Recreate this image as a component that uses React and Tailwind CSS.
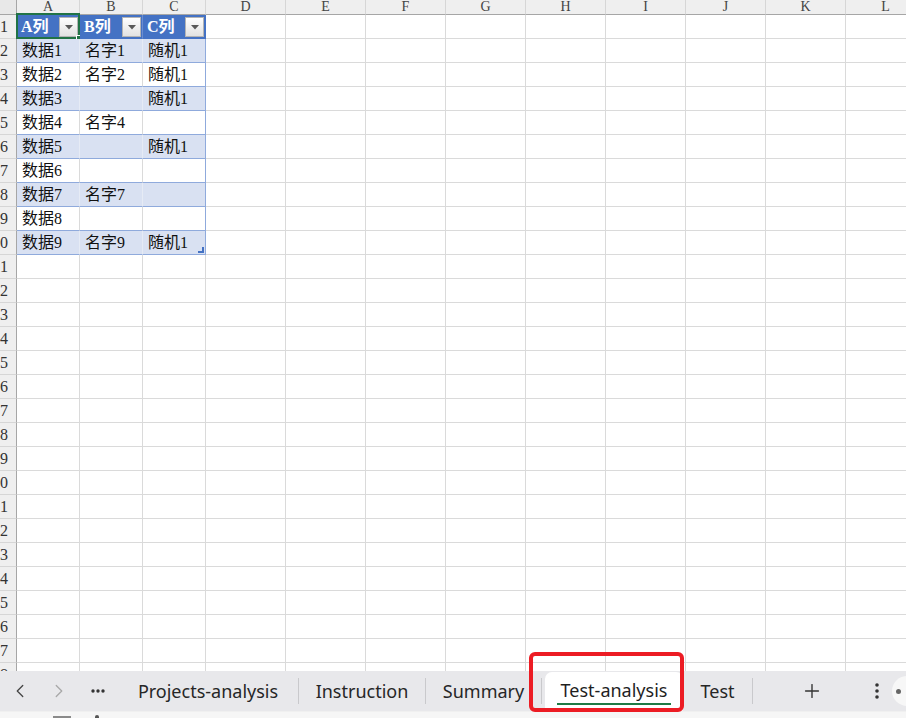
import { ChevronLeft, ChevronRight, Plus } from "lucide-react";

const serif = "font-['Liberation_Serif','Noto_Sans_CJK_SC',serif]";

const columns = [
  { label: "A", w: "w-[63px]" },
  { label: "B", w: "w-[63px]" },
  { label: "C", w: "w-[63px]" },
  { label: "D", w: "w-[80px]" },
  { label: "E", w: "w-[80px]" },
  { label: "F", w: "w-[80px]" },
  { label: "G", w: "w-[80px]" },
  { label: "H", w: "w-[80px]" },
  { label: "I", w: "w-[80px]" },
  { label: "J", w: "w-[80px]" },
  { label: "K", w: "w-[80px]" },
  { label: "L", w: "w-[80px]" },
];

const tableData = [
  ["A列", "B列", "C列"],
  ["数据1", "名字1", "随机1"],
  ["数据2", "名字2", "随机1"],
  ["数据3", "", "随机1"],
  ["数据4", "名字4", ""],
  ["数据5", "", "随机1"],
  ["数据6", "", ""],
  ["数据7", "名字7", ""],
  ["数据8", "", ""],
  ["数据9", "名字9", "随机1"],
];

const rows = Array.from({ length: 28 }, (_, i) => i + 1);

const FilterButton = () => (
  <div className="absolute right-[1px] top-[2px] w-[19px] h-[20px] border border-[#b4b4b4] bg-gradient-to-b from-white to-[#e2e2e2] flex items-center justify-center">
    <svg width="8" height="5" viewBox="0 0 8 5">
      <path d="M0 0 H8 L4 4.5 Z" fill="#595959" />
    </svg>
  </div>
);

const Cell = ({ r, ci, col }) => {
  const inTable = r <= 10 && ci < 3;
  const value = inTable ? tableData[r - 1][ci] : "";
  let cls = "border-r-[#dadada] border-b-[#dadada] bg-white";
  if (inTable && r === 1) {
    cls = ci < 2 ? "border-r-[#6b8dd0] border-b-[#4472c4] bg-[#4472c4]" : "border-r-[#4472c4] border-b-[#4472c4] bg-[#4472c4]";
  } else if (inTable && r % 2 === 0) {
    cls = ci < 2 ? "border-r-[#e6ebf5] border-b-[#8faadc] bg-[#d9e1f2]" : "border-r-[#8faadc] border-b-[#8faadc] bg-[#d9e1f2]";
  } else if (inTable) {
    cls = ci < 2 ? "border-r-[#dadada] border-b-[#8faadc] bg-white" : "border-r-[#8faadc] border-b-[#8faadc] bg-white";
  }

  return (
    <div className={`${col.w} ${cls} shrink-0 h-full border-r border-b relative flex items-center`}>
      {value && (
        <span
          className={
            r === 1
              ? "pl-[4px] text-[16px] font-bold text-white whitespace-nowrap leading-none"
              : "pl-[5px] text-[16px] text-[#111] whitespace-nowrap leading-none"
          }
        >
          {value}
        </span>
      )}
      {inTable && r === 1 && <FilterButton />}
      {r === 1 && ci === 0 && (
        <>
          <div className="absolute -left-[1px] -top-[2px] -right-[1px] -bottom-[1px] border-2 border-[#217346] pointer-events-none" />
          <div className="absolute -right-[3px] -bottom-[3px] w-[6px] h-[6px] bg-[#217346] border border-white" />
        </>
      )}
      {r === 10 && ci === 2 && (
        <svg className="absolute right-[1px] bottom-[1px]" width="6" height="6" viewBox="0 0 6 6">
          <path d="M6 0 V6 H0 V4 H4 V0 Z" fill="#4472c4" />
        </svg>
      )}
    </div>
  );
};

const Sep = () => <div className="w-px h-[26px] bg-[#c9c9cc] shrink-0" />;

const Tab = ({ label, w }) => (
  <div className={`${w} shrink-0 h-full flex items-center justify-center`}>
    <span className="leading-none whitespace-nowrap">{label}</span>
  </div>
);

export default function App() {
  return (
    <div className="relative w-[906px] h-[718px] overflow-hidden bg-white flex flex-col">
      {/* grid */}
      <div className={`h-[671px] overflow-hidden shrink-0 ${serif}`}>
        <div className="flex h-[15px]">
          <div className="w-[17px] shrink-0 h-full bg-[#e8e8e8] border-r border-b border-r-[#a6a6a6] border-b-[#a6a6a6]" />
          {columns.map((col) => (
            <div
              key={col.label}
              className={`${col.w} shrink-0 h-full bg-[#efefef] border-r border-b border-r-[#d6d6d6] border-b-[#a6a6a6] flex items-center justify-center text-[14px] leading-none text-[#444]`}
            >
              {col.label}
            </div>
          ))}
        </div>
        {rows.map((r) => (
          <div key={r} className="flex h-[24px]">
            <div className="w-[17px] shrink-0 h-full bg-[#efefef] border-r border-b border-r-[#a6a6a6] border-b-[#d6d6d6] overflow-hidden flex items-center justify-end pr-[8px] text-[16px] leading-none text-[#333]">
              <span className="whitespace-nowrap">{r}</span>
            </div>
            {columns.map((col, ci) => (
              <Cell key={col.label} r={r} ci={ci} col={col} />
            ))}
          </div>
        ))}
      </div>

      {/* sheet tabs */}
      <div className="h-[40px] shrink-0 bg-[#e8e8eb] flex items-center text-[18px] text-[#262626] font-['Noto_Sans','Noto_Sans_CJK_SC',sans-serif]">
        <div className="w-[39px] shrink-0 h-full flex items-center justify-center text-[#444]">
          <ChevronLeft size={22} strokeWidth={1.4} />
        </div>
        <div className="w-[39px] shrink-0 h-full flex items-center justify-center text-[#a8a8a8]">
          <ChevronRight size={22} strokeWidth={1.4} />
        </div>
        <div className="w-[40px] shrink-0 h-full flex items-center justify-center">
          <svg width="14" height="4" viewBox="0 0 14 4">
            <circle cx="2" cy="2" r="1.7" fill="#333" />
            <circle cx="7" cy="2" r="1.7" fill="#333" />
            <circle cx="12" cy="2" r="1.7" fill="#333" />
          </svg>
        </div>
        <Tab label="Projects-analysis" w="w-[180px]" />
        <Sep />
        <Tab label="Instruction" w="w-[126px]" />
        <Sep />
        <Tab label="Summary" w="w-[115px]" />
        <Sep />
        <div className="ml-[3px] w-[138px] shrink-0 self-stretch mt-[1px] bg-white rounded-t-[7px] flex items-center justify-center">
          <div className="flex flex-col items-center">
            <span className="leading-[22px] text-[#1f1f1f] whitespace-nowrap">Test-analysis</span>
            <div className="w-[114px] h-[2px] mt-[2px] bg-[#1e7b45]" />
          </div>
        </div>
        <Tab label="Test" w="w-[69px]" />
        <Sep />
        <div className="w-[118px] shrink-0 h-full flex items-center justify-center text-[#333]">
          <Plus size={22} strokeWidth={1.5} />
        </div>
        <div className="w-[12px] shrink-0 h-full flex items-center justify-center">
          <svg width="4" height="16" viewBox="0 0 4 16">
            <circle cx="2" cy="2" r="1.8" fill="#333" />
            <circle cx="2" cy="8" r="1.8" fill="#333" />
            <circle cx="2" cy="14" r="1.8" fill="#333" />
          </svg>
        </div>
        <div className="ml-[9px] w-[30px] h-[30px] shrink-0 rounded-full bg-[#f7f7f7] flex items-center pl-[4px]">
          <div className="w-[5px] h-[5px] rounded-full bg-[#666]" />
        </div>
      </div>

      {/* status strip */}
      <div className="h-[7px] shrink-0 bg-[#f6f6f6] border-t border-[#f0f0f0] flex items-start pl-[53px]">
        <div className="w-[18px] h-[2px] mt-[4px] bg-[#8a8a8a]" />
        <div className="ml-[24px] w-[4px] h-[3px] mt-[3px] bg-[#555] rounded-t-full" />
      </div>

      {/* annotation */}
      <div className="absolute left-[529px] top-[652px] w-[155px] h-[60px] border-4 border-[#ec1c24] rounded-[6px] pointer-events-none" />
    </div>
  );
}
